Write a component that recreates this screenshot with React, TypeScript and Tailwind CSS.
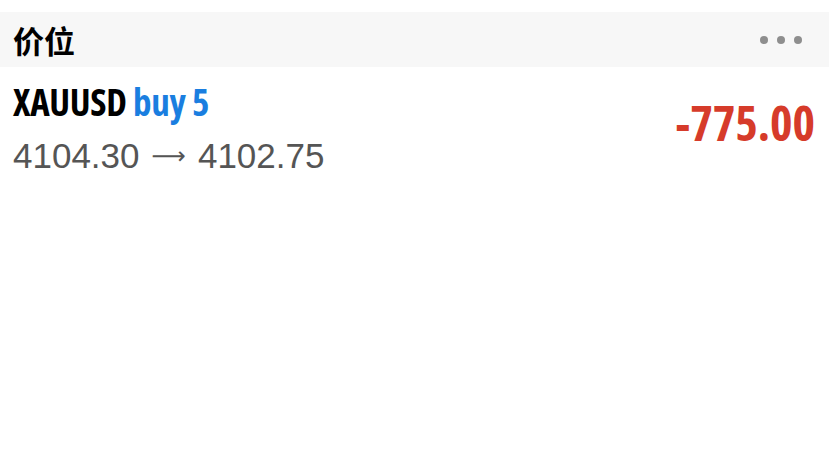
export default function App() {
  return (
    <div className="w-[829px] h-[464px] bg-white pt-3 font-['Liberation_Sans','Noto_Sans_CJK_SC',sans-serif]">
      {/* section header */}
      <div className="h-[55px] bg-[#f7f7f7] flex items-center justify-between pl-[13px] pr-[27px]">
        <span className="text-[31px] leading-none font-bold text-black font-['Noto_Sans_CJK_SC',sans-serif]">价位</span>
        <div className="flex gap-[9px]">
          <span className="w-[8px] h-[8px] rounded-full bg-[#8e8e8e]" />
          <span className="w-[8px] h-[8px] rounded-full bg-[#8e8e8e]" />
          <span className="w-[8px] h-[8px] rounded-full bg-[#8e8e8e]" />
        </div>
      </div>

      {/* position row */}
      <div className="flex items-start justify-between pl-[13px] pr-[14px] pt-[14px]">
        <div className="flex flex-col">
          <div className="text-[37px] font-bold leading-[42px] tracking-[-0.3px] [font-stretch:condensed] font-['Open_Sans',sans-serif]">
            <span className="text-black">XAUUSD</span> <span className="text-[#1a7ee0]">buy 5</span>
          </div>
          <div className="mt-[8px] flex items-center text-[35px] leading-[50px] text-[#555555]">
            <span>4104.30</span>
            <span className="mx-[12px] text-[24px] font-['DejaVu_Sans',sans-serif]">⟶</span>
            <span>4102.75</span>
          </div>
        </div>
        <div className="mt-[18px] text-[48px] leading-none font-bold text-[#d63b2a] [font-stretch:condensed] font-['Open_Sans',sans-serif]">-775.00</div>
      </div>
    </div>
  );
}
